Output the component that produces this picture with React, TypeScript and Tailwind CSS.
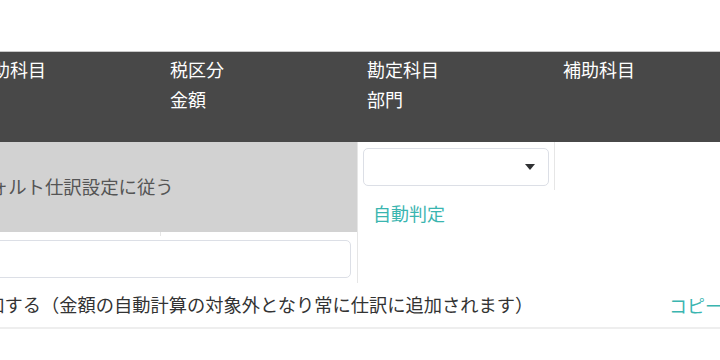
export default function App() {
  return (
    <div className="w-[720px] h-[360px] overflow-hidden bg-white font-['Noto_Sans_CJK_JP','Noto_Sans',sans-serif] text-[18px]">
      <div className="pt-[51px] -ml-[36px] w-[786px]">
        {/* header */}
        <div className="flex h-[91px] border-t border-[#c8c8c8] bg-[#484848] text-white leading-[30px] pt-[2px]">
          <div className="w-[197px] pl-[10px]">補助科目</div>
          <div className="w-[196px] pl-[9px]">
            <div>税区分</div>
            <div>金額</div>
          </div>
          <div className="w-[197px] pl-[10px]">
            <div>勘定科目</div>
            <div>部門</div>
          </div>
          <div className="w-[196px] pl-[9px]">補助科目</div>
        </div>

        {/* body */}
        <div className="flex">
          <div className="w-[393px]">
            <div className="h-[90px] bg-[#d2d2d2] flex items-center text-[#555] text-[18.4px]">
              <span className="-ml-[11px] whitespace-nowrap">デフォルト仕訳設定に従う</span>
            </div>
            <div className="flex h-[4px]">
              <div className="w-[197px] border-r border-[#e6e6e6]" />
            </div>
            <div className="pt-[4px] pb-[5px] pl-[5px] pr-[6px]">
              <input className="w-full h-[38px] border border-[#dcdfe6] rounded-[5px] outline-none" />
            </div>
          </div>
          <div className="w-[197px] border-l border-[#e6e6e6] h-[141px]">
            <div className="pt-[6px] pb-[4px] pl-[5px] pr-[5px]">
              <div className="h-[38px] border border-[#dcdfe6] rounded-[5px] flex items-center justify-end pr-[13px]">
                <svg width="10" height="6" viewBox="0 0 10 6">
                  <path d="M0 0h10L5 6z" fill="#303133" />
                </svg>
              </div>
            </div>
            <div className="mt-[8px] pl-[15px] leading-[30px] text-[#3ab5b0]">自動判定</div>
          </div>
          <div className="w-[196px]">
            <div className="h-[48px] border-l border-[#e6e6e6]" />
          </div>
        </div>

        <div className="flex items-center h-[46px] border-b-2 border-[#eeeeee] text-[#333]">
          <span className="pl-[4px] flex-1 text-[18.25px] whitespace-nowrap">追加する（金額の自動計算の対象外となり常に仕訳に追加されます）</span>
          <span className="w-[81px] text-[#3ab5b0]">コピー</span>
        </div>
      </div>
    </div>
  );
}
